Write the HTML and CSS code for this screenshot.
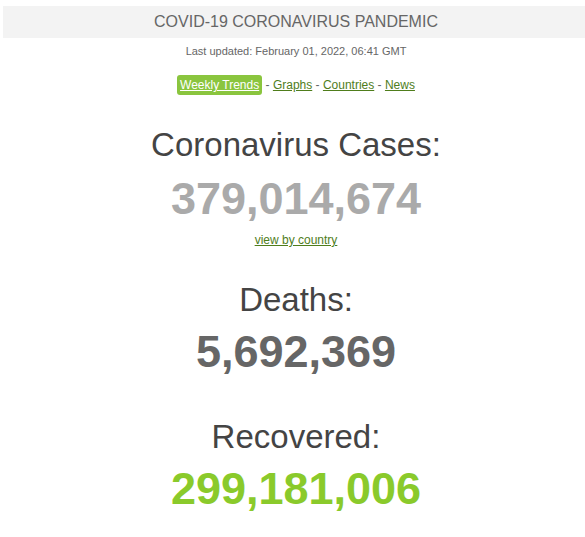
FILE: index.html
```html
<!DOCTYPE html>
<html>
<head>
<meta charset="utf-8">
<link rel="stylesheet" href="styles.css">
</head>
<body>
<div class="page">
  <div class="header">COVID-19 CORONAVIRUS PANDEMIC</div>
  <div class="updated">Last updated: February 01, 2022, 06:41 GMT</div>
  <div class="nav">
    <a class="btn" href="#">Weekly Trends</a> - <a href="#">Graphs</a> - <a href="#">Countries</a> - <a href="#">News</a>
  </div>
  <div class="block first">
    <h1 class="label">Coronavirus Cases:</h1>
    <div class="num cases">379,014,674</div>
    <a class="view" href="#">view by country</a>
  </div>
  <div class="block second">
    <h1 class="label">Deaths:</h1>
    <div class="num deaths">5,692,369</div>
  </div>
  <div class="block third">
    <h1 class="label">Recovered:</h1>
    <div class="num recovered">299,181,006</div>
  </div>
</div>
</body>
</html>
```
FILE: styles.css
```css
html, body {
  margin: 0;
  padding: 0;
  background: #fff;
  overflow: hidden;
}
body {
  font-family: "Liberation Sans", Arial, sans-serif;
  color: #666;
}
.page {
  width: 586px;
  padding: 6px 0 0 3px;
  text-align: center;
}
.header {
  background: #f3f3f3;
  height: 32px;
  line-height: 32px;
  font-size: 16px;
  color: #666;
}
.updated {
  margin-top: 5px;
  font-size: 11px;
  line-height: 16px;
  color: #666;
}
.nav {
  margin-top: 16px;
  font-size: 12px;
  line-height: 20px;
  color: #666;
}
.nav a {
  color: #4f7d1b;
  text-decoration: underline;
}
.nav a.btn {
  display: inline-block;
  background: #8ac53e;
  color: #fff;
  border-radius: 3px;
  padding: 0 3px;
}
.block {
  display: flex;
  flex-direction: column;
  align-items: center;
}
.first { margin-top: 30px; }
.second { margin-top: 32px; }
.third { margin-top: 40px; }
.label {
  margin: 0;
  font-weight: normal;
  font-size: 33px;
  line-height: 40px;
  color: #444;
}
.num {
  margin-top: 9px;
  font-weight: bold;
  font-size: 45px;
  line-height: 50px;
}
.deaths, .recovered { margin-top: 7px; }
.cases { color: #aaa; }
.deaths { color: #666; }
.recovered { color: #8aca2b; }
.view {
  margin-top: 8px;
  font-size: 12px;
  line-height: 16px;
  color: #4f7d1b;
  text-decoration: underline;
}
```
